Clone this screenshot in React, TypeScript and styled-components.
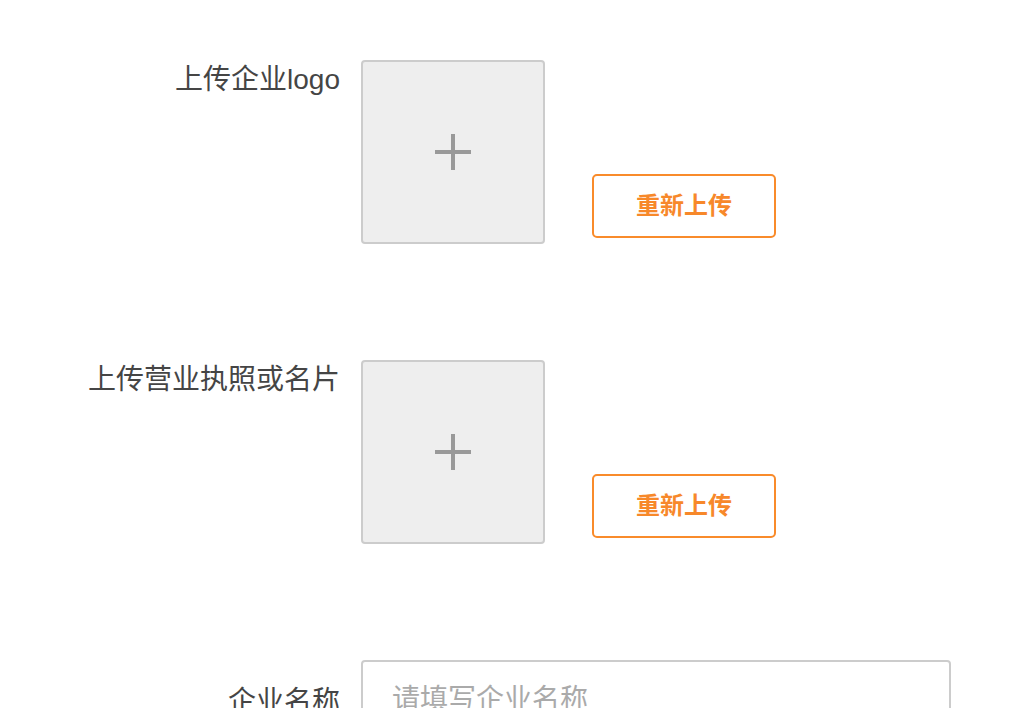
import React from "react";
import styled, { createGlobalStyle } from "styled-components";

const Global = createGlobalStyle`
  html, body { margin: 0; padding: 0; background: #fff; }
  body { font-family: "Liberation Sans", "Noto Sans CJK SC", sans-serif; }
  * { box-sizing: border-box; }
`;

const Page = styled.div`
  display: flex;
  flex-direction: column;
  gap: 116px;
  padding-top: 60px;
`;

const Row = styled.div<{ $center?: boolean }>`
  display: flex;
  align-items: ${(p) => (p.$center ? "center" : "stretch")};
`;

const Label = styled.div<{ $center?: boolean }>`
  width: 340px;
  text-align: right;
  font-size: 28px;
  line-height: 40px;
  color: #454545;
  white-space: nowrap;
  align-self: ${(p) => (p.$center ? "center" : "flex-start")};
  margin-top: ${(p) => (p.$center ? "4px" : "0")};
`;

const UploadBox = styled.div`
  margin-left: 21px;
  width: 184px;
  height: 184px;
  border: 2px solid #cccccc;
  border-radius: 4px;
  background: #eeeeee;
  display: flex;
  align-items: center;
  justify-content: center;
`;

const Plus = styled.div`
  position: relative;
  width: 36px;
  height: 36px;
  &::before,
  &::after {
    content: "";
    position: absolute;
    background: #999999;
  }
  &::before {
    left: 0;
    top: 16px;
    width: 36px;
    height: 4px;
  }
  &::after {
    left: 16px;
    top: 0;
    width: 4px;
    height: 36px;
  }
`;

const ReuploadButton = styled.button`
  margin-left: 47px;
  margin-bottom: 6px;
  align-self: flex-end;
  width: 184px;
  height: 64px;
  border: 2px solid #f98b2b;
  border-radius: 5px;
  background: #fff;
  color: #f7882a;
  font-family: "Liberation Sans", "Noto Sans CJK SC", sans-serif;
  font-size: 24px;
  font-weight: bold;
  padding: 0 0 5px 0;
  cursor: pointer;
`;

const TextInput = styled.input`
  margin-left: 21px;
  width: 590px;
  height: 80px;
  border: 2px solid #cccccc;
  border-radius: 4px;
  padding: 0 29px;
  font-family: "Liberation Sans", "Noto Sans CJK SC", sans-serif;
  font-size: 28px;
  color: #333;
  outline: none;
  &::placeholder {
    color: #aaaaaa;
  }
`;

function UploadRow({ label }: { label: string }) {
  return (
    <Row>
      <Label>{label}</Label>
      <UploadBox>
        <Plus />
      </UploadBox>
      <ReuploadButton>重新上传</ReuploadButton>
    </Row>
  );
}

export default function App() {
  return (
    <>
      <Global />
      <Page>
        <UploadRow label="上传企业logo" />
        <UploadRow label="上传营业执照或名片" />
        <Row $center>
          <Label $center>企业名称</Label>
          <TextInput placeholder="请填写企业名称" />
        </Row>
      </Page>
    </>
  );
}
